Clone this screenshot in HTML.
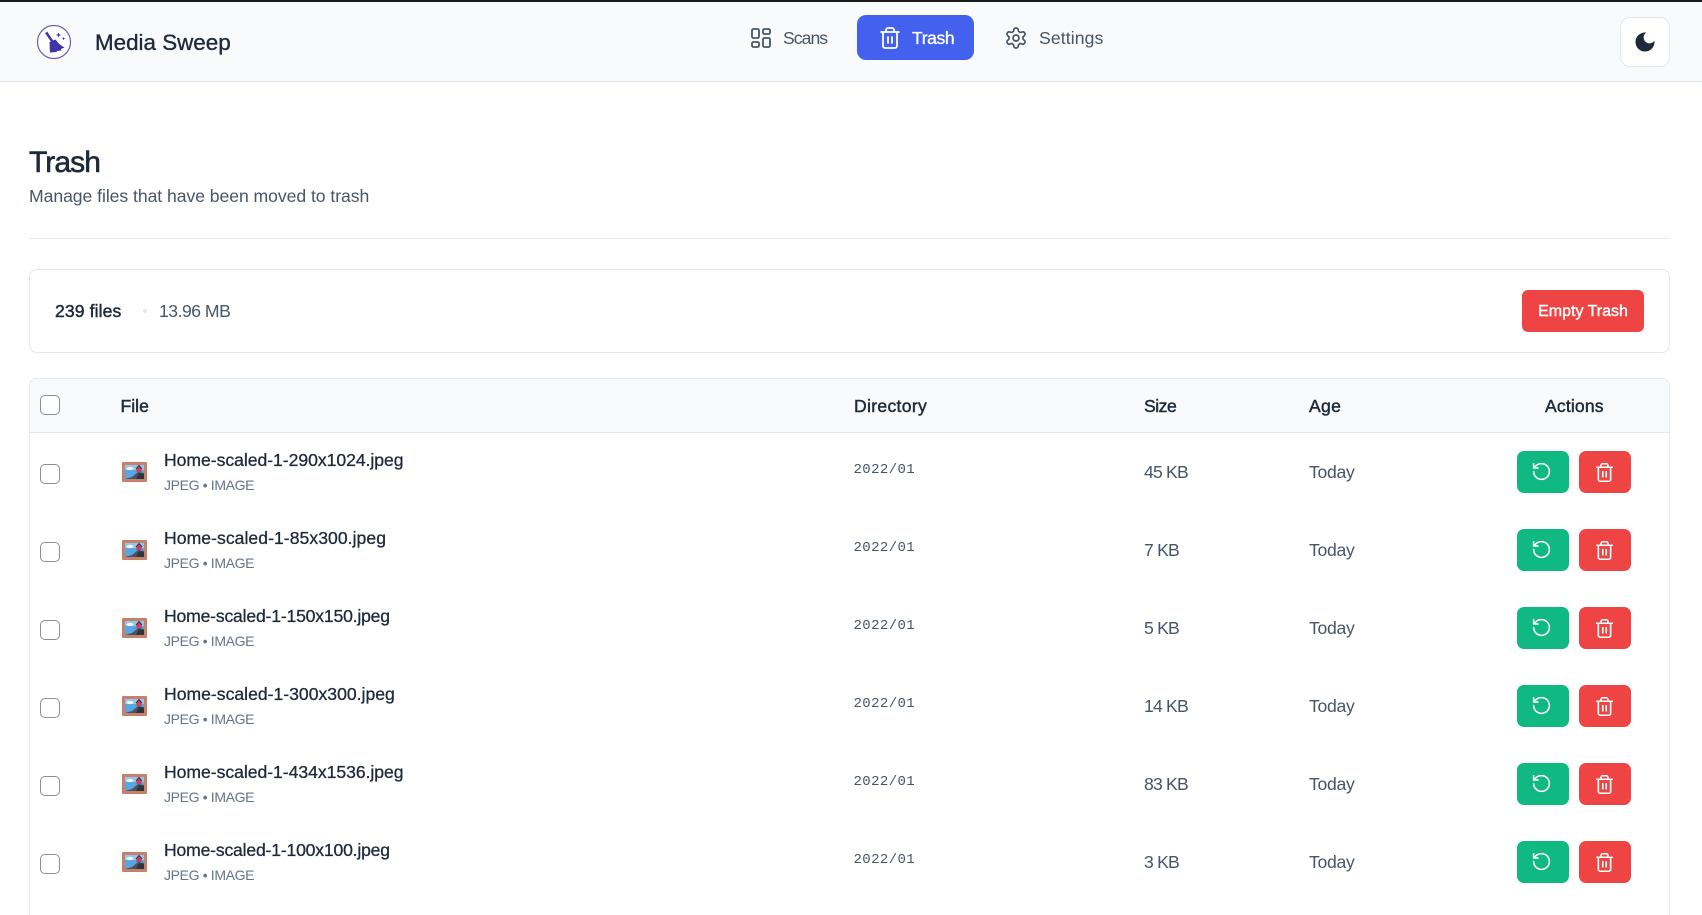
<!DOCTYPE html>
<html lang="en"><head><meta charset="utf-8"><title>Media Sweep</title>
<style>
*{box-sizing:border-box}
html,body{margin:0;padding:0;width:1702px;height:915px;overflow:hidden;background:#fff;font-family:"Liberation Sans",sans-serif;color:#1e293b}
#p{position:relative;width:1702px;height:915px;overflow:hidden;background:#fff}
.a{position:absolute}
.t{position:absolute;white-space:nowrap;line-height:20px;height:20px}
.n{font-size:17.6px;color:#475569}
.th{font-size:17.6px;font-weight:400;color:#1e293b;-webkit-text-stroke:.45px #1e293b}
.name{font-size:17.6px;color:#1e293b;-webkit-text-stroke:.3px #1e293b}
.meta{font-size:14px;color:#64748b;letter-spacing:-.35px}
.dir{font-size:14px;font-family:"Liberation Mono",monospace;color:#475569;letter-spacing:.4px}
.cell{font-size:17.6px;color:#475569}
.sz{letter-spacing:-.8px}
.ag{letter-spacing:-.3px}
.cb{position:absolute;left:40px;width:20px;height:20px;border:1.5px solid #8a8f96;border-radius:5px;background:#fff}
.btn{position:absolute;width:52px;height:42px;border-radius:7px;display:flex;align-items:center;justify-content:center;color:#fff}
.btn svg{width:21px;height:21px}
.g{left:1517px;background:#10b981}
.g svg{margin:-1px 0 0 -3px}
.r{left:1579px;background:#ef4444}
.r svg{margin:0 0 0 -1px}
svg{display:block}
</style></head><body><div id="p">
<svg width="0" height="0" style="position:absolute"><defs>
<symbol id="trash" viewBox="0 0 24 24"><path fill="none" stroke="currentColor" stroke-width="1.800" stroke-linecap="round" stroke-linejoin="round" d="M3 6h18M19 6v14a2 2 0 0 1-2 2H7a2 2 0 0 1-2-2V6M8 6V4a2 2 0 0 1 2-2h4a2 2 0 0 1 2 2v2M10 11v6M14 11v6"/></symbol>
<symbol id="undo" viewBox="0 0 24 24"><path fill="none" stroke="currentColor" stroke-width="1.800" stroke-linecap="round" stroke-linejoin="round" d="M3 12a9 9 0 1 0 9-9 9.75 9.75 0 0 0-6.74 2.74L3 8M3 3v5h5"/></symbol>
<symbol id="pic" viewBox="0 0 25 23">
<rect x="0" y="2" width="25" height="20" rx="1" fill="#c9806a"/>
<rect x="3" y="5" width="19" height="14" fill="#55a6e3"/>
<rect x="3" y="5" width="19" height="5" fill="#8cc8f0"/>
<ellipse cx="8" cy="8.500" rx="3.500" ry="1.600" fill="#f2f6fa"/>
<path d="M3 19l7-2 6-5 6 1v6z" fill="#4b5560"/>
<path d="M14 19l3-6 5 1v5z" fill="#2e343a"/>
<path d="M14.500 9l2.500-3 2.500 3v3h-5z" fill="#d63a55"/>
<path d="M14 9l3-3.500 3 3.500" fill="none" stroke="#3a2d33" stroke-width="1"/>
</symbol>
</defs></svg>

<div class="a" style="left:0;top:0;width:1702px;height:82px;background:#f8fafc;border-bottom:1px solid #e2e8f0"></div>
<div class="a" style="left:0;top:0;width:1702px;height:2px;background:#1a1a1a"></div>

<svg class="a" style="left:36px;top:25px" width="36" height="36" viewBox="0 0 36 36">
<circle cx="18" cy="17" r="16.500" fill="#fff" stroke="#6a5cc4" stroke-width="1.200"/>
<path d="M9 8l2.200-1.300 6.200 9-2.200 1.300z" fill="#3d36a8"/>
<path d="M13.500 17l6-2.500 2 2.500c2 2.500 4.500 4 7 5.500l-3.500 1.500.5 1.500-4.500.5-.5 1-6.500.5c-.5-3.500-.2-7.500-.5-10.500z" fill="#3d36a8"/>
<path d="M22.500 7.500l.8 1.700 1.700.8-1.700.8-.8 1.700-.8-1.700-1.700-.8 1.700-.8zM27.500 12l.5 1.100 1.100.5-1.100.5-.5 1.100-.5-1.100-1.100-.5 1.100-.5z" fill="#3d36a8"/>
</svg>
<div class="t" style="left:95px;top:33px;font-size:22.4px;color:#1e293b;-webkit-text-stroke:.35px #1e293b">Media Sweep</div>

<svg class="a" style="left:748.500px;top:26px" width="24" height="24" viewBox="0 0 24 24" fill="none" stroke="#475569" stroke-width="1.800" stroke-linejoin="round"><rect x="3" y="3" width="7" height="9" rx="1.500"/><rect x="14" y="3" width="7" height="5" rx="1.500"/><rect x="14" y="12" width="7" height="9" rx="1.500"/><rect x="3" y="16" width="7" height="5" rx="1.500"/></svg>
<div class="t n" style="left:783px;top:28px;letter-spacing:-.95px">Scans</div>

<div class="a" style="left:857px;top:15px;width:117px;height:45px;background:#4361ee;border-radius:9px"></div>
<svg class="a" style="left:878px;top:26px;color:#fff" width="24" height="24"><use href="#trash"/></svg>
<div class="t" style="left:912px;top:28px;font-size:17.6px;color:#fff;-webkit-text-stroke:.3px #fff;letter-spacing:-.4px">Trash</div>

<svg class="a" style="left:1004px;top:26px" width="24" height="24" viewBox="0 0 24 24" fill="none" stroke="#475569" stroke-width="1.700" stroke-linecap="round" stroke-linejoin="round"><path d="M12.220 2h-.44a2 2 0 0 0-2 2v.18a2 2 0 0 1-1 1.730l-.43.25a2 2 0 0 1-2 0l-.15-.08a2 2 0 0 0-2.730.73l-.22.38a2 2 0 0 0 .73 2.730l.15.1a2 2 0 0 1 1 1.720v.51a2 2 0 0 1-1 1.740l-.15.09a2 2 0 0 0-.73 2.730l.22.38a2 2 0 0 0 2.730.73l.15-.08a2 2 0 0 1 2 0l.43.25a2 2 0 0 1 1 1.730V20a2 2 0 0 0 2 2h.44a2 2 0 0 0 2-2v-.18a2 2 0 0 1 1-1.730l.43-.25a2 2 0 0 1 2 0l.15.08a2 2 0 0 0 2.730-.73l.22-.39a2 2 0 0 0-.73-2.730l-.15-.08a2 2 0 0 1-1-1.740v-.5a2 2 0 0 1 1-1.740l.15-.09a2 2 0 0 0 .73-2.730l-.22-.38a2 2 0 0 0-2.730-.73l-.15.08a2 2 0 0 1-2 0l-.43-.25a2 2 0 0 1-1-1.730V4a2 2 0 0 0-2-2z"/><circle cx="12" cy="12" r="3"/></svg>
<div class="t n" style="left:1039px;top:28px;letter-spacing:.1px">Settings</div>

<div class="a" style="left:1620px;top:17px;width:50px;height:50px;background:#fff;border:1px solid #e2e8f0;border-radius:10px"></div>
<svg class="a" style="left:1633px;top:30px" width="24" height="24" viewBox="0 0 24 24"><path d="M12 3a6 6 0 0 0 9 9 9 9 0 1 1-9-9Z" fill="#1e293b" stroke="#1e293b" stroke-width="1"/></svg>

<div class="t" style="left:29px;top:151px;height:24px;line-height:24px;font-size:30px;color:#1e293b;-webkit-text-stroke:.6px #1e293b;letter-spacing:-.9px">Trash</div>
<div class="t" style="left:29px;top:186px;font-size:17.6px;color:#475569;letter-spacing:-.05px">Manage files that have been moved to trash</div>
<div class="a" style="left:29px;top:238px;width:1641px;height:1px;background:#e2e8f0"></div>

<div class="a" style="left:29px;top:269px;width:1641px;height:84px;border:1px solid #e2e8f0;border-radius:8px;background:#fff"></div>
<div class="t" style="left:55px;top:301px;font-size:17.6px;color:#1e293b;-webkit-text-stroke:.45px #1e293b;letter-spacing:.1px">239 files</div>
<div class="a" style="left:143px;top:309px;width:4px;height:4px;border-radius:50%;background:#e2e8f0"></div>
<div class="t" style="left:159px;top:301px;font-size:17.6px;color:#475569;letter-spacing:-.5px">13.96 MB</div>
<div class="a" style="left:1522px;top:290px;width:122px;height:42px;background:#ef4444;border-radius:6px"></div>
<div class="t" style="left:1522px;width:122px;text-align:center;top:302px;font-size:16px;color:#fff;-webkit-text-stroke:.4px #fff">Empty Trash</div>

<div class="a" style="left:29px;top:378px;width:1641px;height:560px;border:1px solid #e2e8f0;border-radius:8px;background:#fff"></div>
<div class="a" style="left:30px;top:379px;width:1639px;height:54px;background:#f8fafc;border-bottom:1px solid #e2e8f0;border-radius:7px 7px 0 0"></div>
<div class="cb" style="top:395px"></div>
<div class="t th" style="left:120.500px;top:396px">File</div>
<div class="t th" style="left:854px;top:396px;letter-spacing:.3px">Directory</div>
<div class="t th" style="left:1144px;top:396px;letter-spacing:-.5px">Size</div>
<div class="t th" style="left:1309px;top:396px;letter-spacing:.3px">Age</div>
<div class="t th" style="left:1545px;top:396px;letter-spacing:.15px">Actions</div>

<!-- row 1 -->
<div class="cb" style="top:464px"></div>
<svg class="a" style="left:122px;top:459.500px" width="25" height="23"><use href="#pic"/></svg>
<div class="t name" style="left:164px;top:450px;letter-spacing:-.04px">Home-scaled-1-290x1024.jpeg</div>
<div class="t meta" style="left:164px;top:475px">JPEG • IMAGE</div>
<div class="t dir" style="left:853.500px;top:460px">2022/01</div>
<div class="t cell sz" style="left:1144px;top:462px">45 KB</div>
<div class="t cell ag" style="left:1309px;top:462px">Today</div>
<div class="btn g" style="top:451px"><svg><use href="#undo"/></svg></div>
<div class="btn r" style="top:451px"><svg><use href="#trash"/></svg></div>

<!-- row 2 -->
<div class="cb" style="top:542px"></div>
<svg class="a" style="left:122px;top:537.500px" width="25" height="23"><use href="#pic"/></svg>
<div class="t name" style="left:164px;top:528px;letter-spacing:.04px">Home-scaled-1-85x300.jpeg</div>
<div class="t meta" style="left:164px;top:553px">JPEG • IMAGE</div>
<div class="t dir" style="left:853.500px;top:538px">2022/01</div>
<div class="t cell sz" style="left:1144px;top:540px">7 KB</div>
<div class="t cell ag" style="left:1309px;top:540px">Today</div>
<div class="btn g" style="top:529px"><svg><use href="#undo"/></svg></div>
<div class="btn r" style="top:529px"><svg><use href="#trash"/></svg></div>

<!-- row 3 -->
<div class="cb" style="top:620px"></div>
<svg class="a" style="left:122px;top:615.500px" width="25" height="23"><use href="#pic"/></svg>
<div class="t name" style="left:164px;top:606px;letter-spacing:-.19px">Home-scaled-1-150x150.jpeg</div>
<div class="t meta" style="left:164px;top:631px">JPEG • IMAGE</div>
<div class="t dir" style="left:853.500px;top:616px">2022/01</div>
<div class="t cell sz" style="left:1144px;top:618px">5 KB</div>
<div class="t cell ag" style="left:1309px;top:618px">Today</div>
<div class="btn g" style="top:607px"><svg><use href="#undo"/></svg></div>
<div class="btn r" style="top:607px"><svg><use href="#trash"/></svg></div>

<!-- row 4 -->
<div class="cb" style="top:698px"></div>
<svg class="a" style="left:122px;top:693.500px" width="25" height="23"><use href="#pic"/></svg>
<div class="t name" style="left:164px;top:684px">Home-scaled-1-300x300.jpeg</div>
<div class="t meta" style="left:164px;top:709px">JPEG • IMAGE</div>
<div class="t dir" style="left:853.500px;top:694px">2022/01</div>
<div class="t cell sz" style="left:1144px;top:696px">14 KB</div>
<div class="t cell ag" style="left:1309px;top:696px">Today</div>
<div class="btn g" style="top:685px"><svg><use href="#undo"/></svg></div>
<div class="btn r" style="top:685px"><svg><use href="#trash"/></svg></div>

<!-- row 5 -->
<div class="cb" style="top:776px"></div>
<svg class="a" style="left:122px;top:771.500px" width="25" height="23"><use href="#pic"/></svg>
<div class="t name" style="left:164px;top:762px;letter-spacing:-.04px">Home-scaled-1-434x1536.jpeg</div>
<div class="t meta" style="left:164px;top:787px">JPEG • IMAGE</div>
<div class="t dir" style="left:853.500px;top:772px">2022/01</div>
<div class="t cell sz" style="left:1144px;top:774px">83 KB</div>
<div class="t cell ag" style="left:1309px;top:774px">Today</div>
<div class="btn g" style="top:763px"><svg><use href="#undo"/></svg></div>
<div class="btn r" style="top:763px"><svg><use href="#trash"/></svg></div>

<!-- row 6 -->
<div class="cb" style="top:854px"></div>
<svg class="a" style="left:122px;top:849.500px" width="25" height="23"><use href="#pic"/></svg>
<div class="t name" style="left:164px;top:840px;letter-spacing:-.19px">Home-scaled-1-100x100.jpeg</div>
<div class="t meta" style="left:164px;top:865px">JPEG • IMAGE</div>
<div class="t dir" style="left:853.500px;top:850px">2022/01</div>
<div class="t cell sz" style="left:1144px;top:852px">3 KB</div>
<div class="t cell ag" style="left:1309px;top:852px">Today</div>
<div class="btn g" style="top:841px"><svg><use href="#undo"/></svg></div>
<div class="btn r" style="top:841px"><svg><use href="#trash"/></svg></div>
</div></body></html>
